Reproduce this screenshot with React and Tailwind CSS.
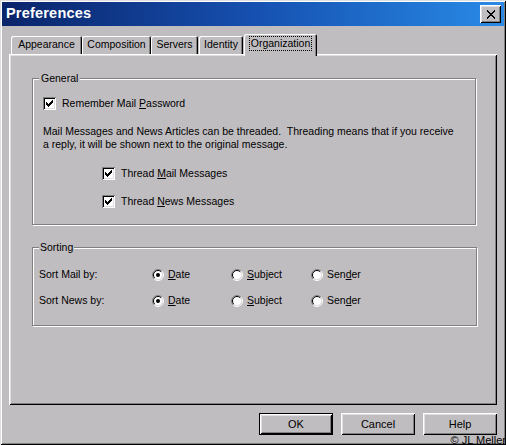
import React from 'react';

const raised = 'shadow-[inset_1px_1px_#fff,inset_-1px_-1px_#000,inset_2px_2px_#dfdfdf,inset_-2px_-2px_#808080]';

const CheckBox = () => (
    <span className="w-[13px] h-[13px] bg-white shrink-0 flex items-center justify-center shadow-[inset_1px_1px_#808080,inset_-1px_-1px_#fff,inset_2px_2px_#000,inset_-2px_-2px_#dfdfdf]">
        <svg width="9" height="9" viewBox="0 0 9 9" shapeRendering="crispEdges">
            <path d="M1 3h1v3H1zM2 4h1v3H2zM3 5h1v3H3zM4 4h1v3H4zM5 3h1v3H5zM6 2h1v3H6zM7 1h1v3H7z" fill="#000" />
        </svg>
    </span>
);

const Radio = ({ on }) => (
    <svg width="12" height="12" viewBox="0 0 12 12" className="shrink-0">
        <circle cx="6" cy="6" r="4.5" fill="#fff" />
        <path d="M2.1 9.9A5.5 5.5 0 0 1 9.9 2.1" stroke="#808080" fill="none" />
        <path d="M9.9 2.1A5.5 5.5 0 0 1 2.1 9.9" stroke="#fff" fill="none" />
        <path d="M2.8 9.2A4.5 4.5 0 0 1 9.2 2.8" stroke="#000" fill="none" />
        <path d="M9.2 2.8A4.5 4.5 0 0 1 2.8 9.2" stroke="#dfdfdf" fill="none" />
        {on && <circle cx="6" cy="6" r="2" fill="#000" />}
    </svg>
);

const Tab = ({ label, w }) => (
    <div className="h-[18px] rounded-t-[2px] flex items-center justify-center shadow-[inset_1px_1px_#fff,inset_-1px_0_#000,inset_-2px_0_#808080]" style={{ width: w }}>
        {label}
    </div>
);

const SortRow = ({ label, className }) => (
    <div className={`flex items-center h-[13px] ${className}`}>
        <span className="w-[113px]">{label}</span>
        <div className="w-[79px] flex items-center gap-[4px]"><Radio on /><span><u>D</u>ate</span></div>
        <div className="w-[80px] flex items-center gap-[4px]"><Radio /><span><u>S</u>ubject</span></div>
        <div className="flex items-center gap-[4px]"><Radio /><span>Sen<u>d</u>er</span></div>
    </div>
);

const App = () => {
    return (
        <div className="w-[506px] h-[445px] bg-[#c0bdc0] relative p-[2px] flex flex-col text-[10.5px] text-black font-['Liberation_Sans',Arial,sans-serif] shadow-[inset_1px_1px_#dfdfdf,inset_-1px_-1px_#000,inset_2px_2px_#fff,inset_-2px_-2px_#808080] overflow-hidden">
            {/* title bar */}
            <div className="h-[24px] flex items-center bg-gradient-to-r from-[#0a246a] via-[#1650b0] to-[#2a8ae6] pl-[4px] pr-[3px]">
                <span className="text-white font-bold text-[14.5px] tracking-[0.2px]">Preferences</span>
                <button className={`ml-auto w-[21px] h-[18px] bg-[#c0bdc0] flex items-center justify-center ${raised}`}>
                    <svg width="10" height="9" viewBox="0 0 10 9" shapeRendering="crispEdges">
                        <path d="M1 0.5L9 8.5M9 0.5L1 8.5" stroke="#000" strokeWidth="2" />
                    </svg>
                </button>
            </div>

            {/* tabs */}
            <div className="mt-[8px] h-[20px] ml-[9px] flex items-end">
                <Tab label="Appearance" w={71} />
                <Tab label="Composition" w={69} />
                <Tab label="Servers" w={47} />
                <div className="w-[1px]" />
                <Tab label="Identity" w={44} />
                <div className="w-[1px]" />
                <div className="w-[73px] h-[22px] -mb-[2px] relative z-10 bg-[#c0bdc0] rounded-t-[2px] flex items-start justify-center pt-[3px] shadow-[inset_1px_1px_#fff,inset_-1px_0_#000,inset_-2px_0_#808080]">
                    <span className="outline outline-1 outline-dotted outline-black px-[1px] leading-[13px]">Organization</span>
                </div>
            </div>

            {/* panel */}
            <div className={`ml-[7px] w-[488px] h-[351px] pt-[18px] ${raised}`}>
                <fieldset className="ml-[23px] w-[444px] border border-[#808080] shadow-[inset_1px_1px_#fff,1px_1px_#fff] pl-[10px] pb-[16px]">
                    <legend className="-ml-[4px] px-[2px] leading-[13px] bg-[#c0bdc0]">General</legend>
                    <div className="mt-[12px] flex items-center h-[13px] gap-[6px]">
                        <CheckBox />
                        <span>Remember Mail <u>P</u>assword</span>
                    </div>
                    <p className="mt-[15px] leading-[13px] whitespace-nowrap">
                        Mail Messages and News Articles can be threaded.{'\u00a0'} Threading means that if you receive
                        <br />
                        a reply, it will be shown next to the original message.
                    </p>
                    <div className="mt-[16px] ml-[59px] flex items-center h-[13px] gap-[6px]">
                        <CheckBox />
                        <span>Thread <u>M</u>ail Messages</span>
                    </div>
                    <div className="mt-[15px] ml-[59px] flex items-center h-[13px] gap-[6px]">
                        <CheckBox />
                        <span>Thread <u>N</u>ews Messages</span>
                    </div>
                </fieldset>

                <fieldset className="mt-[16px] ml-[23px] w-[445px] border border-[#808080] shadow-[inset_1px_1px_#fff,1px_1px_#fff] pl-[6px] pb-[18px]">
                    <legend className="ml-0 px-[1px] leading-[13px] bg-[#c0bdc0]">Sorting</legend>
                    <SortRow label="Sort Mail by:" className="mt-[14px]" />
                    <SortRow label="Sort News by:" className="mt-[13px]" />
                </fieldset>
            </div>

            {/* buttons */}
            <div className="mt-[8px] ml-[7px] w-[488px] flex justify-end gap-[8px]">
                <button className="w-[74px] h-[22px] border border-black bg-[#c0bdc0] shadow-[inset_1px_1px_#fff,inset_-1px_-1px_#000,inset_2px_2px_#dfdfdf,inset_-2px_-2px_#808080] text-[11px]">OK</button>
                <button className={`w-[74px] h-[22px] bg-[#c0bdc0] ${raised} text-[11px]`}>Cancel</button>
                <button className={`w-[74px] h-[22px] bg-[#c0bdc0] ${raised} text-[11px]`}>Help</button>
            </div>

            <span className="absolute right-0 bottom-[-2px] text-[11px] leading-[13px]">© JL Meller</span>
        </div>
    );
};

export default App;
